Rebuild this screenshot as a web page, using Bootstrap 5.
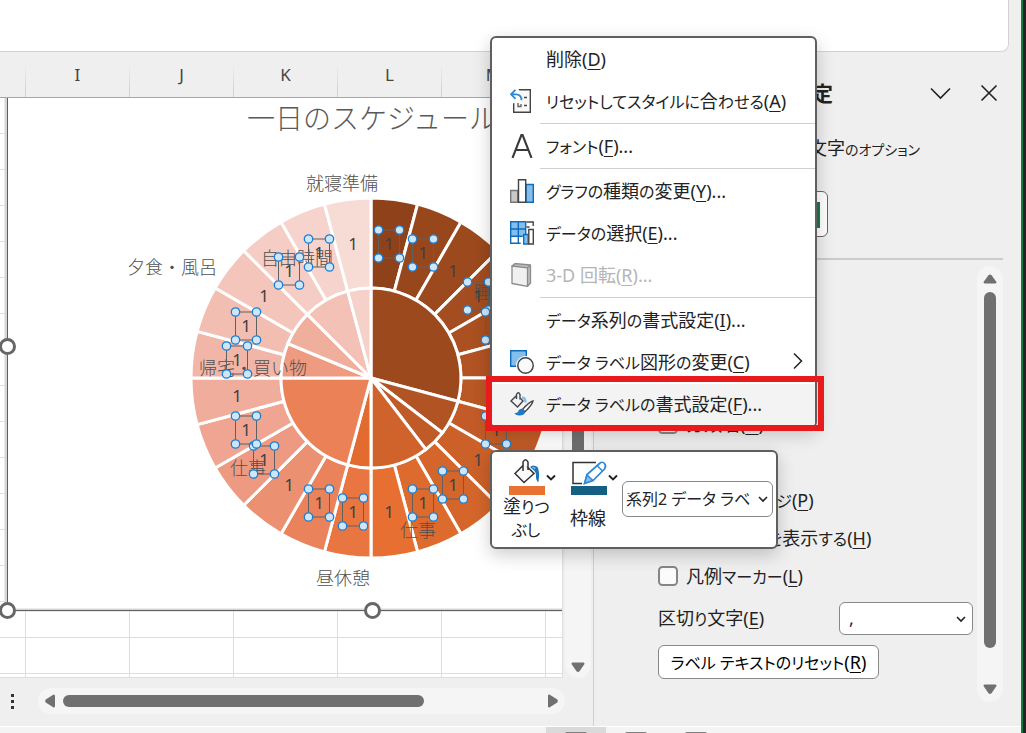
<!DOCTYPE html>
<html lang="ja">
<head>
<meta charset="utf-8">
<meta name="viewport" content="width=device-width, initial-scale=1">
<title>一日のスケジュール</title>
<link href="https://cdn.jsdelivr.net/npm/bootstrap@5.3.0/dist/css/bootstrap.min.css" rel="stylesheet">
<script src="https://cdn.jsdelivr.net/npm/bootstrap@5.3.0/dist/js/bootstrap.bundle.min.js"></script>
<style>
  :root { --face: #efefef; --track: #f5f5f5; --thumb: #707070; --line: #d2d2d2; --edge: #5f5f5f; }
  body { font-family: "Noto Sans", "Noto Sans CJK JP", sans-serif; font-size: 18px; line-height: 24px; color: #222; background: var(--face); font-feature-settings: "palt"; }
  button, select { font-feature-settings: inherit; }
  u { text-underline-offset: 3px; text-decoration-thickness: 1px; }
  .kana { font-size: 16px; }
  .win-edge { width: 5px; background: #222; border-left: 2px solid #107c41; }
  .formula-input { height: 52px; margin-right: 12px; background: #fff; border: 1px solid var(--line); border-width: 0 1px 1px 0; border-radius: 0 0 8px 0; }
  .sheet-side { min-width: 0; }
  .work-row { min-height: 0; }
  .col-heads { height: 46px; border-bottom: 1px solid #a6a6a6; color: #444; font-size: 17px; }
  .col-head { flex: 0 0 104px; padding-top: 11px; text-align: center; border-image: linear-gradient(var(--face) 25%, #cfcfcf 90%) 1; border-width: 0 1px 0 0; border-style: solid; }
  .col-head:first-child { flex-basis: 26px; }
  .cells { background: #fff; border: 1px solid #dedede; border-width: 0 1px 1px 0;
    background-image: linear-gradient(to right, #dedede 1px, transparent 1px), linear-gradient(to bottom, #dedede 1px, transparent 1px);
    background-size: 104px 36px; background-position: 25px 35px; }
  .chart-svg { position: absolute; left: 0; top: 0; width: 100%; height: 100%; }
  .v-track { width: 26px; background: var(--track); border-radius: 0 0 13px 13px; }
  .sheet-track { margin: 0 2px; padding: 160px 0 6px; }
  .sheet-track .v-thumb { height: 280px; }
  .v-thumb, .h-thumb { background: var(--thumb); border-radius: 6px; }
  .v-thumb { width: 12px; }
  .pane-thumb { margin: 8px 0 28px; }
  .h-bar { height: 48px; padding: 0 28px 2px 8px; }
  .h-track { height: 26px; background: var(--track); border-radius: 13px; padding: 0 6px; gap: 7px; }
  .h-thumb { width: 70%; height: 12px; }
  .fmt-pane { flex: 0 0 428px; border-left: 1px solid #cfcfcf; }
  .pane-head { height: 82px; padding-right: 22px; gap: 27px; }
  .pane-title { width: 239px; font-size: 21px; font-weight: 700; text-align: right; white-space: nowrap; }
  .pane-tabs { height: 30px; gap: 22px; padding: 2px 0 0 18px; }
  .pane-tabs a { color: inherit; text-decoration: none; }
  .pane-tabs .kana { font-size: 14px; }
  .tab-first { flex: 0 0 175px; }
  .bare-btn { border: 0; background: none; padding: 0; line-height: 0; }
  .pane-kinds { height: 96px; padding: 27px 0 0 188px; border-bottom: 2px solid #cbcbcb; margin-right: 18px; }
  .kind-btn { width: 46px; height: 46px; border: 1px solid #666; border-radius: 6px; background: #fff; padding: 10px 7px; }
  .kind-btn svg { display: block; }
  .pane-scroll { padding: 6px 18px 24px 0; }
  .pane-opts { padding: 139px 4px 0 64px; }
  .opt-row { height: 38px; gap: 8px; }
  .opt-row input { width: 20px; height: 20px; margin: 0; border: 2px solid #868686; border-radius: 3px; background-color: #fbfbfb; }
  .sep-row { margin-top: 7px; }
  .sep-select { width: 134px; height: 33px; border: 1px solid #888; border-radius: 6px; background-color: #fff; padding: 0 9px; font-size: 18px; background-position: right 6px center; background-size: 10px; }
  .tick-down { background-image: url("data:image/svg+xml,%3Csvg xmlns='http://www.w3.org/2000/svg' viewBox='0 0 10 10'%3E%3Cpath d='M1 3l4 4 4-4' fill='none' stroke='%23222' stroke-width='1.6'/%3E%3C/svg%3E"); background-repeat: no-repeat; }
  .reset-btn { width: 221px; height: 34px; margin-top: 10px; border: 1px solid #888; border-radius: 6px; background: #fff; padding: 0; line-height: 24px; white-space: nowrap; }
  .status-bar { height: 7px; background: #f4f4f4; border-top: 1px solid #fff; padding-left: 546px; }
  .view-btn { width: 60px; height: 7px; border: 0; padding: 4px 19px 0; background: none; }
  .view-btn.on { background: #dadada; }
  .view-btn span { display: block; height: 2px; background: #808080; border-radius: 2px 2px 0 0; }
  .ctx-menu, .mini-bar { position: absolute; background: #fff; border: 2px solid var(--edge); border-radius: 6px; box-shadow: 0 6px 18px rgba(0,0,0,.2); }
  .ctx-menu { left: 490px; top: 36px; width: 327px; padding-top: 1px; overflow: hidden; }
  .ctx-row { height: 42px; border: 0; background: none; padding: 0 12px 2px 18px; color: #222; gap: 12px; white-space: nowrap; text-align: left; }
  .ctx-row:disabled { color: #b5b5b5; }
  .ctx-row.hot { background: #f3f3f3; }
  .ctx-row svg, .ctx-gap { flex: 0 0 24px; width: 24px; height: 24px; }
  .ctx-row .sub-arrow { flex-basis: 10px; }
  .ctx-line { height: 3px; border-top: 1px solid #cfcfcf; margin-left: 48px; }
  .mark-frame { position: absolute; left: 486px; top: 376px; width: 338px; height: 55px; border: 6px solid #e81a1c; pointer-events: none; }
  .mini-bar { left: 490px; top: 450px; width: 288px; height: 99px; padding: 7px 3px 0 11px; }
  .tool-btn { flex: 0 0 62px; border: 0; background: none; padding: 0; color: #222; }
  .tool-btn:nth-child(2) { flex-basis: 56px; }
  .tool-btn svg { flex: none; }
  .tool-cap { width: 46px; text-align: center; line-height: 22px; white-space: nowrap; }
  .series-select { width: 151px; height: 36px; margin-top: 22px; border: 1px solid #888; border-radius: 6px; padding: 0 16px 0 3px; font-size: 16px; background-color: #fff; background-position: right 4px center; background-size: 10px; }
</style>
</head>
<body class="overflow-hidden">
<div class="d-flex vh-100 position-relative">
  <div class="d-flex flex-column flex-grow-1 sheet-side">
    <input class="formula-input d-block" aria-label="数式バー">
    <div class="d-flex flex-grow-1 sheet-side work-row">
      <main class="d-flex flex-column flex-grow-1 sheet-side">
        <div class="d-flex flex-grow-1 work-row">
          <div class="d-flex flex-column flex-grow-1 sheet-side">
            <div class="col-heads d-flex overflow-hidden">
              <div class="col-head"></div><div class="col-head">I</div><div class="col-head">J</div><div class="col-head">K</div><div class="col-head">L</div><div class="col-head">M</div>
            </div>
            <div class="cells flex-grow-1 position-relative overflow-hidden">
              <svg class="chart-svg" id="chart" role="img" aria-label="一日のスケジュール"></svg>
            </div>
          </div>
          <div class="v-track sheet-track d-flex flex-column align-items-center justify-content-between">
            <div class="v-thumb"></div>
            <svg width="14" height="10"><path d="M1.500 .5h11q1.500 .5.800 1.800l-4.800 7q-1.500 1.200-3 0l-4.800-7q-.7-1.300.8-1.800z" fill="#707070"/></svg>
          </div>
        </div>
        <div class="h-bar d-flex align-items-center">
          <svg width="10" height="18" class="me-3"><path d="M3 2h3v3h-3zM3 8h3v3h-3zM3 14h3v3h-3z" fill="#333"/></svg>
          <div class="h-track d-flex align-items-center flex-grow-1 ms-1">
            <svg width="12" height="14"><path d="M11 1.500v11q-.5 1.500-1.800.8l-7.500-4.800q-1.200-1.500 0-3l7.500-4.800q1.300-.7 1.800.8z" fill="#707070"/></svg>
            <div class="h-thumb"></div>
            <svg class="ms-auto" width="12" height="14"><path d="M1 1.500v11q.5 1.500 1.800.8l7.500-4.800q1.200-1.500 0-3l-7.500-4.800q-1.300-.7-1.800.8z" fill="#707070"/></svg>
          </div>
        </div>
      </main>
      <aside class="fmt-pane d-flex flex-column">
        <div class="pane-head d-flex align-items-center">
          <div class="pane-title">データ ラベルの書式設定</div>
          <button class="bare-btn ms-auto" aria-label="作業ウィンドウのオプション"><svg width="24" height="24"><path d="M3 7.500l9.500 9.500 9.500-9.500" fill="none" stroke="#222" stroke-width="1.600"/></svg></button>
          <button class="bare-btn" aria-label="閉じる"><svg width="20" height="20"><path d="M2.500 2.500l15 15m0-15l-15 15" fill="none" stroke="#222" stroke-width="1.600"/></svg></button>
        </div>
        <div class="pane-tabs d-flex"><a href="#" class="tab-first kana">ラベル オプション</a><a href="#" class="text-nowrap">文字<span class="kana">のオプション</span></a></div>
        <div class="pane-kinds"><button class="kind-btn" aria-label="ラベル オプション"><svg width="30" height="26"><path d="M0 12h8v14h-8zM10 6h8v20h-8zM21 0h9v26h-9z" fill="#1d7a48"/></svg></button></div>
        <div class="pane-scroll d-flex flex-grow-1">
          <div class="pane-opts flex-grow-1">
            <div class="opt-row d-flex align-items-center"><input class="form-check-input" type="checkbox" id="o1"><label for="o1">分類名(<u>G</u>)</label></div>
            <div class="opt-row d-flex align-items-center"><input class="form-check-input" type="checkbox" id="o2"><label for="o2">値(<u>V</u>)</label></div>
            <div class="opt-row d-flex align-items-center"><input class="form-check-input" type="checkbox" id="o3"><label for="o3"><span class="kana">パーセンテージ</span>(<u>P</u>)</label></div>
            <div class="opt-row d-flex align-items-center"><input class="form-check-input" type="checkbox" id="o4"><label for="o4">引<span class="kana">き</span>出<span class="kana">し</span>線<span class="kana">を</span>表示<span class="kana">する</span>(<u>H</u>)</label></div>
            <div class="opt-row d-flex align-items-center"><input class="form-check-input" type="checkbox" id="o5"><label for="o5">凡例<span class="kana">マーカー</span>(<u>L</u>)</label></div>
            <div class="sep-row d-flex align-items-center justify-content-between"><label for="sep">区切<span class="kana">り</span>文字(<u>E</u>)</label><select id="sep" class="form-select sep-select tick-down"><option>,</option></select></div>
            <button class="reset-btn"><span class="kana">ラベル テキストのリセット</span>(<u>R</u>)</button>
          </div>
          <div class="v-track d-flex flex-column align-items-center rounded-pill py-2">
            <svg width="14" height="10"><path d="M1.500 9.500h11q1.500-.5.800-1.800l-4.800-6.500q-1.500-1.200-3 0l-4.800 6.500q-.7 1.300.8 1.800z" fill="#707070"/></svg>
            <div class="v-thumb pane-thumb flex-grow-1"></div>
            <svg class="mt-2" width="14" height="10"><path d="M1.500 .5h11q1.500 .5.800 1.800l-4.800 7q-1.500 1.200-3 0l-4.800-7q-.7-1.300.8-1.800z" fill="#707070"/></svg>
          </div>
        </div>
      </aside>
    </div>
    <div class="status-bar d-flex overflow-hidden">
      <button class="view-btn on" aria-label="標準"><span></span></button>
      <button class="view-btn" aria-label="ページ レイアウト"><span></span></button>
      <button class="view-btn" aria-label="改ページ プレビュー"><span></span></button>
    </div>
  </div>
  <div class="win-edge"></div>

  <div class="ctx-menu d-flex flex-column">
    <button class="ctx-row d-flex align-items-center"><span class="ctx-gap"></span><span>削除(<u>D</u>)</span></button>
    <button class="ctx-row d-flex align-items-center">
      <svg viewBox="0 0 24 24" fill="none"><path d="M8 .7h12.300v22.600H3.700v-9" fill="#fafafa" stroke="#444" stroke-width="1.400"/><path d="M0 0h8.500l3 6 1 7-9 1H0z" fill="#fff"/><path d="M5.500 .8L1 5.300l4.500 4.500M1 5.300h5.500q5 .5 5 6" stroke="#2b88d8" stroke-width="1.800"/><path d="M14 8.500h3M14 16.500h3" stroke="#444" stroke-width="1.400"/><path d="M8 14v3.500h3v-2.500" stroke="#666" stroke-width="1.400"/></svg>
      <span><span class="kana">リセットしてスタイルに</span>合<span class="kana">わせる</span>(<u>A</u>)</span></button>
    <div class="ctx-line"></div>
    <button class="ctx-row d-flex align-items-center">
      <svg viewBox="0 0 24 24" fill="none"><path d="M2.500 24L11.500 .8h1L21.500 24M5.500 16h13" stroke="#3a3a3a" stroke-width="2.100"/></svg>
      <span><span class="kana">フォント</span>(<u>F</u>)...</span></button>
    <div class="ctx-line"></div>
    <button class="ctx-row d-flex align-items-center">
      <svg viewBox="0 0 24 24"><path d="M.7 11.500h7v11.800h-7z" fill="#c8c8c8" stroke="#777" stroke-width="1.400"/><path d="M16 5.500h7.300v17.800H16z" fill="#83beec" stroke="#0f6cbd" stroke-width="1.400"/><path d="M8.500 .7h7.200v22.600H8.500z" fill="#fff" stroke="#444" stroke-width="1.400"/></svg>
      <span><span class="kana">グラフの</span>種類<span class="kana">の</span>変更(<u>Y</u>)...</span></button>
    <button class="ctx-row d-flex align-items-center">
      <svg viewBox="0 0 24 24" fill="none"><path d="M.7 .7h15v15H.7z" fill="#83beec"/><path d="M15.700 15V.7H.7v21.600h10M.7 8h15M8.300 .7v21.600M.7 15.300h12" stroke="#0f6cbd" stroke-width="1.400"/><path d="M16.500 1h6.700v4M16.500 6h3" stroke="#444" stroke-width="1.400"/><path d="M13.700 13.500h4.500v9.500h-4.500z" fill="#83beec" stroke="#0f6cbd" stroke-width="1.400"/><path d="M18.800 8.500h4.500v14.500h-4.500z" fill="#fff" stroke="#444" stroke-width="1.400"/></svg>
      <span><span class="kana">データの</span>選択(<u>E</u>)...</span></button>
    <button class="ctx-row d-flex align-items-center" disabled>
      <svg viewBox="0 0 24 24" stroke="#8b8b8b" stroke-width="1.300" stroke-linejoin="round"><path d="M2 3l3-2.500L20.500 2v18l-3 3.300z" fill="#bdbdbd"/><path d="M2 3l15.500 1.800v18.500L2 20.500z" fill="#f0f0f0"/><path d="M17.500 4.800l3-2.800" fill="none"/></svg>
      <span>3-D 回転(<u>R</u>)...</span></button>
    <div class="ctx-line"></div>
    <button class="ctx-row d-flex align-items-center"><span class="ctx-gap"></span><span><span class="kana">データ</span>系列<span class="kana">の</span>書式設定(<u>I</u>)...</span></button>
    <button class="ctx-row d-flex align-items-center">
      <svg viewBox="0 0 24 24"><path d="M.7 .7h15.600v15.600H.7z" fill="#83beec" stroke="#0f6cbd" stroke-width="1.400"/><circle cx="15.500" cy="15.500" r="9.500" fill="#fff"/><circle cx="15.500" cy="15.500" r="7.700" fill="#fafafa" stroke="#444" stroke-width="1.500"/></svg>
      <span><span class="kana">データ ラベル</span>図形<span class="kana">の</span>変更(<u>C</u>)</span>
      <svg class="ms-auto sub-arrow" viewBox="0 0 10 24" fill="none"><path d="M1 3.500l7.500 7.500L1 18.500" stroke="#222" stroke-width="1.500"/></svg></button>
    <button class="ctx-row hot d-flex align-items-center">
      <svg viewBox="0 0 24 24" fill="none"><path d="M7 3L1 9l6.500 6 5.500-6-3-3M6.500 7V2.500q1.800-3.500 3.500 0v5" stroke="#444" stroke-width="1.400"/><path d="M12 5.500q3.500 0 3.500 5" stroke="#83beec" stroke-width="2.400"/><path d="M23 9q-4 1-10.500 8.500l2.500 2.300Q22 13 23 9z" fill="#fff" stroke="#444" stroke-width="1.300"/><path d="M12.500 16.800q-3.500-.3-4.300 2.700-.7 2-4 1.800 2 2.500 6 2.200 5-.5 5-4z" fill="#1e7ac8"/></svg>
      <span><span class="kana">データ ラベルの</span>書式設定(<u>F</u>)...</span></button>
  </div>
  <div class="mark-frame"></div>

  <div class="mini-bar d-flex">
    <button class="tool-btn d-flex flex-column">
      <svg width="56" height="36" viewBox="-2 0 56 36" fill="none"><path d="M17 4.500L10 14l9 9.500 10-9.500-7.500-7" fill="#fafafa"/><path d="M18 6.500L10 14.500l9 9 10-9-7-7M18 12V3q2.500-4.500 5 0v8" stroke="#333" stroke-width="1.500"/><path d="M25 8q3-3 7.500 0 2.500 4 1 15-1.500 0-2.500-4 .3-5-1.500-7z" fill="#1b75bc"/><path d="M27.500 8.500q2-.5 2.500 1.500" stroke="#83beec" stroke-width="1.500"/><path d="M4 27h36v9H4z" fill="#e97132"/><path d="M42 16.500l4 4 4-4" stroke="#222" stroke-width="1.900"/></svg>
      <span class="tool-cap">塗<span class="kana">りつ<br>ぶし</span></span></button>
    <button class="tool-btn d-flex flex-column">
      <svg width="56" height="36" viewBox="-2 0 56 36" fill="none"><path d="M29 3.500H6v21h9" stroke="#333" stroke-width="1.500"/><path d="M17.500 24.500l2.500-9L32.500 4.500q3-2.500 5 0t0 5.500L26 21.500z" fill="#fff" stroke="#2b88d8" stroke-width="1.700"/><path d="M17.500 24.500l2.500-8.500 6 5.500z" fill="#83beec" stroke="#2b88d8" stroke-width="1.400"/><path d="M30 6.500l5.500 5.500" stroke="#2b88d8" stroke-width="1.400"/><path d="M4 27h36v9H4z" fill="#156082"/><path d="M42 16.500l4 4 4-4" stroke="#222" stroke-width="1.900"/></svg>
      <span class="tool-cap mt-2 pt-1">枠線</span></button>
    <select class="form-select series-select tick-down ms-auto" aria-label="グラフ要素"><option>系列2 データ ラベ</option></select>
  </div>
</div>
<script>
  // Sunburst: one outer ring cell per hour, one inner sector per activity
  const cx = 371, cy = 280, R = 180, r = 90;
  const pt = (rad, deg) => { const a = deg * Math.PI / 180; return [cx + rad * Math.sin(a), cy - rad * Math.cos(a)].map(v => v.toFixed(1)).join(' '); };
  const hours = ['#8f421a','#98471c','#9c491d','#a44d20','#aa5021','#b15323','#b95725','#c25b27','#cb6029','#d4662b','#dd6b2e','#e76f31',
                 '#e97640','#ea825b','#ec9072','#ee9a82','#efa591','#f0ad9c','#f2b6a8','#f3beb2','#f4c5bb','#f5cdc4','#f6d3cc','#f7dbd5'];
  const acts = [[0,105,'#9c491d'],[105,127.5,'#b15323'],[127.5,142.5,'#c05a27'],[142.5,180,'#cf632b'],[180,195,'#e26c30'],
                [195,270,'#ea8157'],[270,292.5,'#ee9b82'],[292.5,315,'#f0ae9d'],[315,345,'#f3c1b5'],[345,360,'#f5d1c9']];
  const names = [['就寝準備',342,85],['夕食・風呂',172,169],['自由時間',297,160],['帰宅・買い物',253,270],['仕事',248,370],['仕事',418,432],['昼休憩',343,480],['睡眠',492,194]];
  let s = '<rect x="6" y="-5" width="700" height="517" fill="#fff" stroke="#d6d6d6" stroke-width="3"/><path d="M7.500 0V512.500H740" fill="none" stroke="#5f5f5f"/>';
  s += '<g stroke="#fff" stroke-width="3">';
  hours.forEach((c, k) => { const a = k * 15, b = a + 15; s += `<path fill="${c}" d="M${pt(r,a)}L${pt(R,a)}A${R} ${R} 0 0 1 ${pt(R,b)}L${pt(r,b)}A${r} ${r} 0 0 0 ${pt(r,a)}Z"/>`; });
  acts.forEach(([a, b, c]) => { s += `<path fill="${c}" d="M${cx} ${cy}L${pt(r,a)}A${r} ${r} 0 0 1 ${pt(r,b)}Z"/>`; });
  s += '</g><g font-size="18" font-weight="300" fill="#505050" text-anchor="middle" style="font-feature-settings:normal">';
  names.forEach(([t, x, y]) => { s += `<text x="${x}" y="${y + 7}">${t}</text>`; });
  s += '<text x="372" y="31" font-size="28" fill="#595959">一日のスケジュール</text></g>';
  hours.forEach((c, k) => {
    const [x, y] = pt(135, k * 15 + 7.5).split(' ').map(v => Math.round(v));
    s += `<text x="${x}" y="${y + 6}" font-size="17" fill="#404040" text-anchor="middle">1</text>`;
    if (k % 3 !== 2) {
      s += `<rect x="${x - 10.5}" y="${y - 14}" width="21" height="28" fill="none" stroke="#606060"/>`;
      for (const dx of [-10.5, 10.5]) for (const dy of [-14, 14]) s += `<circle cx="${x + dx}" cy="${y + dy}" r="4.200" fill="#cfe6f8" stroke="#1a7fd4" stroke-width="1.300"/>`;
    }
  });
  for (const [x, y] of [[7.5, 248.5], [7.5, 512.5], [372.5, 512.5]]) s += `<circle cx="${x}" cy="${y}" r="7" fill="#fff" stroke="#666" stroke-width="3"/>`;
  document.getElementById('chart').innerHTML = s;
</script>
</body>
</html>
